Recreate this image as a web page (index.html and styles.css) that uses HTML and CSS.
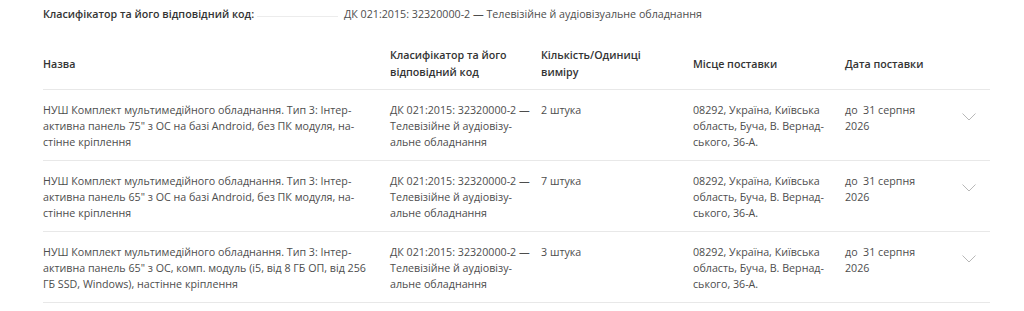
FILE: index.html
```html
<!DOCTYPE html>
<html lang="uk">
<head>
<meta charset="utf-8">
<link rel="stylesheet" href="styles.css">
</head>
<body>
<div class="page">
  <div class="info">
    <div class="info-label"><span class="info-text">Класифікатор та його відповідний код:</span><span class="info-line"></span></div>
    <div class="info-value">ДК 021:2015: 32320000-2 — Телевізійне й аудіовізуальне обладнання</div>
  </div>

  <div class="table">
    <div class="row head">
      <div class="cell">Назва</div>
      <div class="cell">Класифікатор та його відповідний код</div>
      <div class="cell qty">Кількість/Одиниці виміру</div>
      <div class="cell">Місце поставки</div>
      <div class="cell">Дата поставки</div>
      <div class="cell"></div>
    </div>

    <div class="row">
      <div class="cell">НУШ Комплект мультимедійного обладнання. Тип 3: Інтер&shy;активна панель 75" з ОС на базі Android, без ПК модуля, на&shy;стінне кріплення</div>
      <div class="cell">ДК 021:2015: 32320000-2 — Телевізійне й аудіовізу&shy;альне обладнання</div>
      <div class="cell qty">2 штука</div>
      <div class="cell">08292, Україна, Київська область, Буча, В. Вернад&shy;ського, 36-А.</div>
      <div class="cell">до &nbsp;31 серпня 2026</div>
      <div class="cell chev-cell"><svg class="chev" width="14" height="8" viewBox="0 0 14 8"><path d="M0.5 0.5 L7 7 L13.5 0.5" fill="none" stroke="#b8b8b8" stroke-width="1"/></svg></div>
    </div>

    <div class="row">
      <div class="cell">НУШ Комплект мультимедійного обладнання. Тип 3: Інтер&shy;активна панель 65" з ОС на базі Android, без ПК модуля, на&shy;стінне кріплення</div>
      <div class="cell">ДК 021:2015: 32320000-2 — Телевізійне й аудіовізу&shy;альне обладнання</div>
      <div class="cell qty">7 штука</div>
      <div class="cell">08292, Україна, Київська область, Буча, В. Вернад&shy;ського, 36-А.</div>
      <div class="cell">до &nbsp;31 серпня 2026</div>
      <div class="cell chev-cell"><svg class="chev" width="14" height="8" viewBox="0 0 14 8"><path d="M0.5 0.5 L7 7 L13.5 0.5" fill="none" stroke="#b8b8b8" stroke-width="1"/></svg></div>
    </div>

    <div class="row">
      <div class="cell">НУШ Комплект мультимедійного обладнання. Тип 3: Інтер&shy;активна панель 65" з ОС, комп. модуль (i5, від 8 ГБ ОП, від 256 ГБ SSD, Windows), настінне кріплення</div>
      <div class="cell">ДК 021:2015: 32320000-2 — Телевізійне й аудіовізу&shy;альне обладнання</div>
      <div class="cell qty">3 штука</div>
      <div class="cell">08292, Україна, Київська область, Буча, В. Вернад&shy;ського, 36-А.</div>
      <div class="cell">до &nbsp;31 серпня 2026</div>
      <div class="cell chev-cell"><svg class="chev" width="14" height="8" viewBox="0 0 14 8"><path d="M0.5 0.5 L7 7 L13.5 0.5" fill="none" stroke="#b8b8b8" stroke-width="1"/></svg></div>
    </div>
  </div>
</div>
</body>
</html>
```

FILE: styles.css
```css
html, body {
  margin: 0;
  padding: 0;
  background: #ffffff;
}

body {
  font-family: "Open Sans", "Liberation Sans", sans-serif;
  font-size: 10.7px;
  color: #4d4d4d;
}

.page {
  padding: 6px 0 0 43px;
  width: 947px;
}

.info {
  display: flex;
  align-items: center;
  line-height: 17px;
}

.info-label {
  width: 301px;
  display: flex;
  align-items: center;
}

.info-text {
  font-weight: 600;
  color: #333333;
}

.info-line {
  flex: 1;
  height: 0;
  border-top: 1px solid #ececec;
  margin: 3px 6px 0 3px;
}

.info-value {
  color: #4d4d4d;
}

.table {
  margin-top: 14px;
}

.row {
  display: grid;
  grid-template-columns: 347px 151px 152px 152px 90px 55px;
  border-bottom: 1px solid #e8e8e8;
  padding: 12px 0 10px;
  line-height: 16px;
}

.row.head {
  padding: 10px 0 8px;
  align-items: center;
  line-height: 17px;
  font-weight: 600;
  color: #333333;
}

.cell {
  padding-right: 8px;
  hyphens: manual;
}

.row .cell:first-child {
  padding-right: 18px;
}

.row .cell.qty {
  padding-right: 30px;
}

.row .cell:nth-child(5) {
  padding-right: 4px;
}

.chev-cell {
  display: flex;
  justify-content: flex-end;
  padding: 11px 14px 0 0;
}

.chev {
  display: block;
}
```
